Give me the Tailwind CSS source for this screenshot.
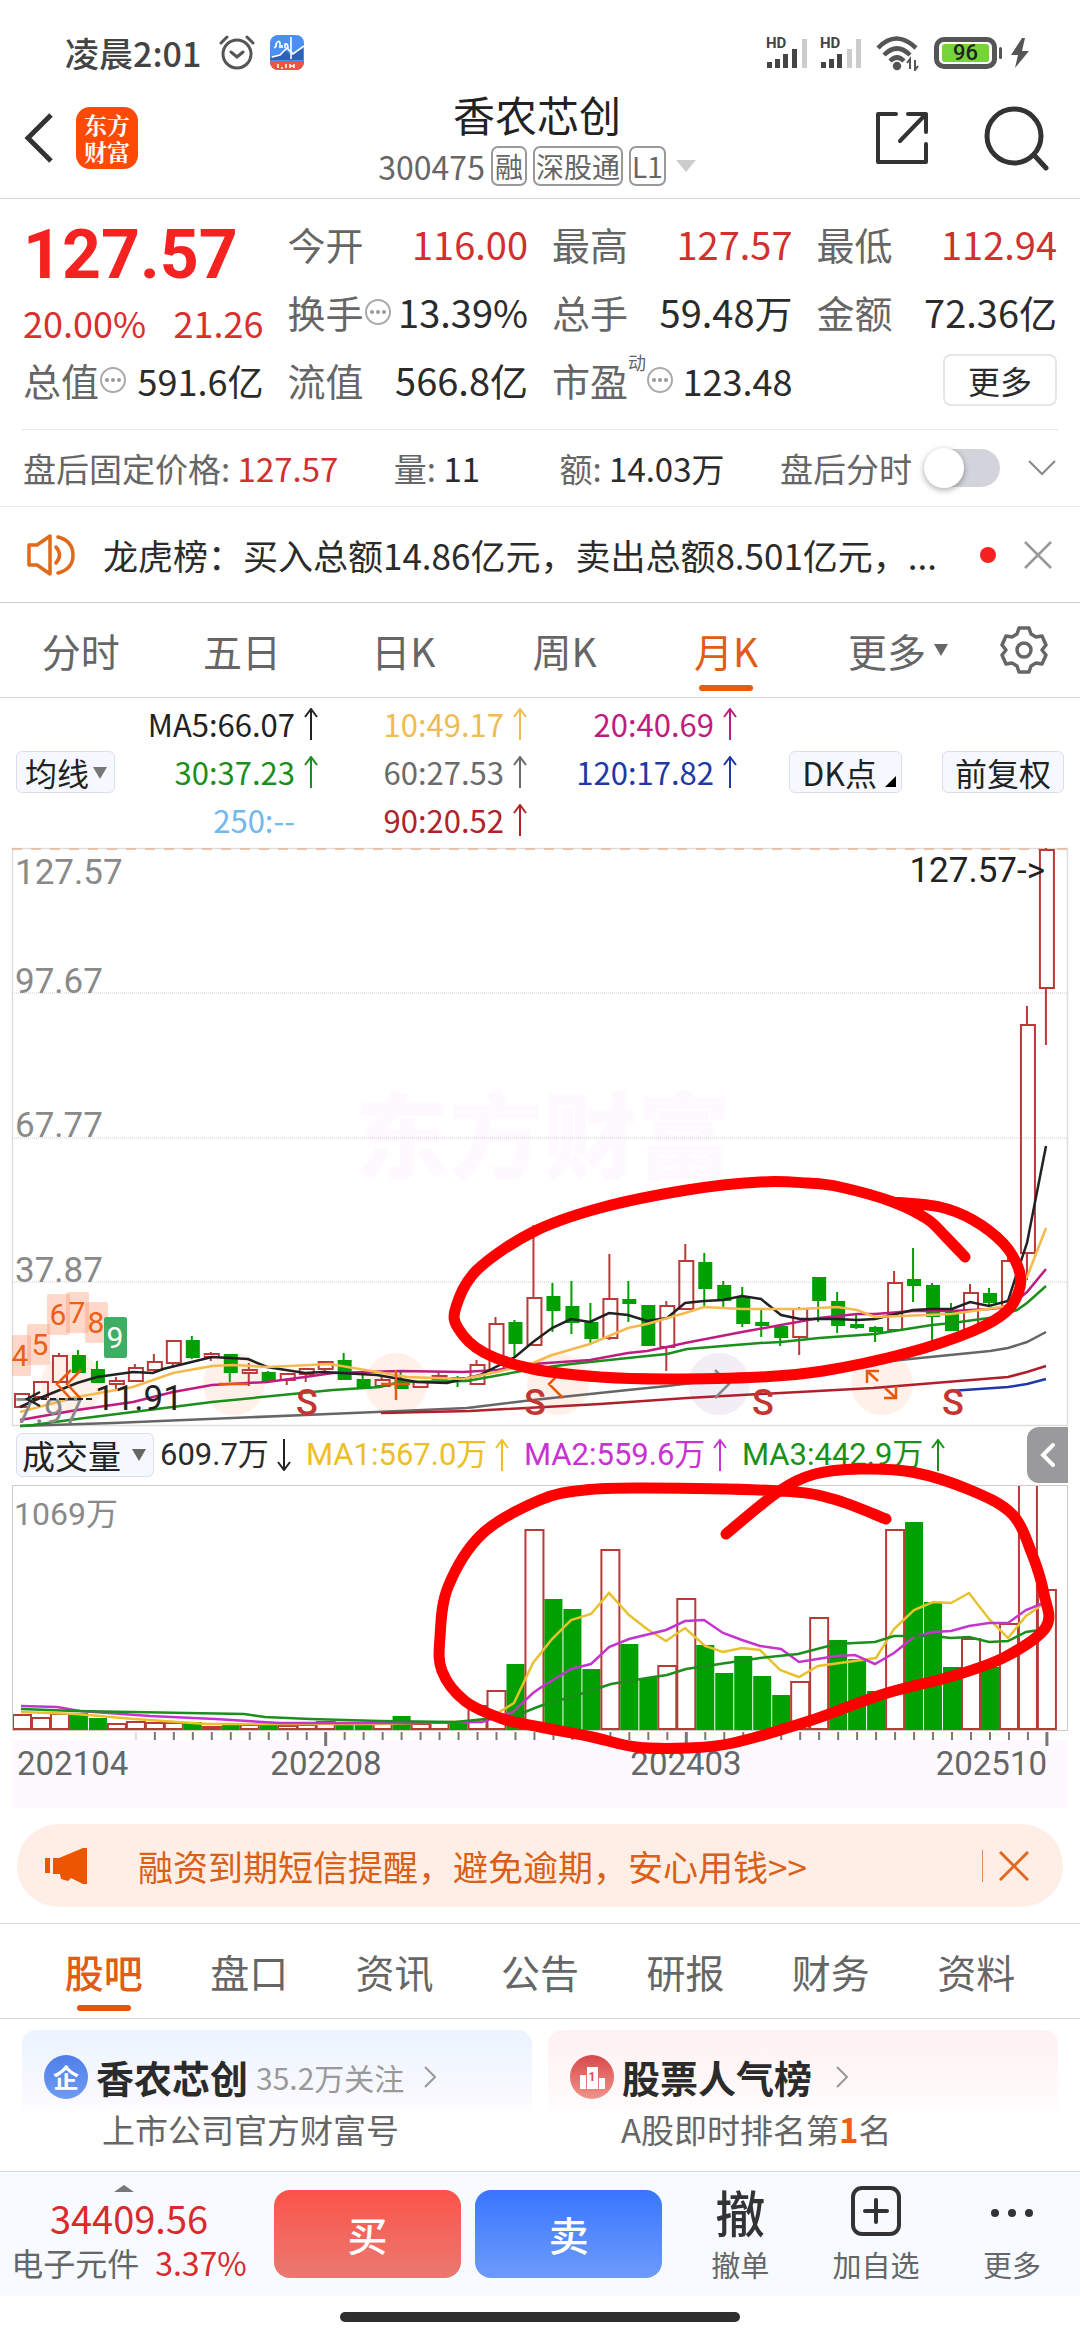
<!DOCTYPE html>
<html lang="zh-CN">
<head>
<meta charset="utf-8">
<meta name="viewport" content="width=device-width, initial-scale=1">
<title>香农芯创 300475</title>
<script src="https://cdn.jsdelivr.net/npm/@tailwindcss/browser@4"></script>
</head>
<body class="bg-white text-[#2b2b2b] font-['Noto_Sans_CJK_SC',sans-serif]">

<!-- status bar -->
<div class="flex items-center justify-between pt-[31px] pb-[3px] pl-[65px] pr-[50px] leading-[44px] text-[#444]">
  <div class="flex items-center">
    <span class="text-[34px] font-medium">凌晨2:01</span>
    <svg class="ml-[18px] size-9" viewBox="0 0 36 36" fill="none" stroke="#555" stroke-width="3" stroke-linecap="round"><circle cx="18" cy="19" r="14"/><path d="M12 17l6 5 6-5M2 8l6-6M34 8l-6-6"/></svg>
    <svg class="ml-[14px] size-9" viewBox="0 0 36 36"><defs><clipPath id="app"><rect width="34" height="35" x="1" rx="8"/></clipPath></defs><g clip-path="url(#app)"><path fill="#4b8ff0" d="M0 0h36v36H0z"/><path fill="#2e62b8" d="M0 24l8-3 8-6 6 5 12-7v12H0z"/><path d="M3 22l8-2 7-7 6 6 11-8M22 2v22" stroke="#fff" stroke-width="1.600" fill="none"/><path d="M5 13q3-1 2-4 3-5 4-1v5m2-3v3m3 0V9q3-1 3 4" stroke="#fff" stroke-width="1.600" fill="none"/><path fill="#e9573f" d="M0 26h36v10H0z"/><path d="M9 29v4m3 0h2m3-4v4m4-4v4m0-2h4m0-2v4" stroke="#fff" stroke-width="1.500"/></g></svg>
  </div>
  <div class="flex items-center">
    <svg class="h-9 w-[96px]" viewBox="0 0 96 36"><g fill="#444"><text x="0" y="13" font-size="15" font-weight="700" font-family="Roboto">HD</text><path d="M1 27h5v6H1zM9 24h5v9H9zM17 19h5v14h-5zM26 14h5v19h-5z"/><text x="54" y="13" font-size="15" font-weight="700" font-family="Roboto">HD</text><path d="M55 27h5v6h-5zM63 24h5v9h-5zM71 19h5v14h-5z"/></g><path fill="#ccc" d="M36 4h5v29h-5zM81 14h5v19h-5zM90 4h5v29h-5z"/></svg>
    <svg class="ml-[14px] h-9 w-[44px]" viewBox="0 0 44 36" fill="none" stroke="#555" stroke-width="4.500"><path d="M2 13q18-19 38 0M8 20q13-13 26 0M14 26q7-7 14 0"/><circle cx="21" cy="31" r="2" fill="#555"/><path d="M34 34V24l-3 4M39 25v10l3-4" stroke-width="2"/></svg>
    <span class="ml-[14px] flex h-8 w-[63px] items-center justify-center rounded-[10px] border-[5px] border-[#555]"><span class="flex h-[18px] w-[47px] items-center justify-center rounded-[3px] bg-[#76d33c] font-['Roboto',sans-serif] text-[22px] font-medium leading-[18px] text-[#222]">96</span></span>
    <span class="ml-[2px] h-3 w-[3px] rounded bg-[#555]"></span>
    <svg class="ml-[8px] h-8 w-5" viewBox="0 0 20 32" fill="#555"><path d="M12 1L1 18h7L5 31l14-17h-7l3-13z"/></svg>
  </div>
</div>

<!-- title bar -->
<header class="relative flex items-center justify-between border-b border-[#d9d9d9] pl-[24px] pr-[30px] pt-[12px] pb-[12px]">
  <div class="flex flex-1 items-center gap-[22px]">
    <button aria-label="返回"><svg class="h-[50px] w-[30px]" viewBox="0 0 30 50" fill="none" stroke="#333" stroke-width="5"><path d="M27 2L4 25l23 23"/></svg></button>
    <a href="#home" class="size-[62px] rounded-[14px] bg-[#ff4a05] pt-1 text-center font-['Noto_Serif_CJK_SC','Noto_Sans_CJK_SC',serif] text-[23px] font-bold leading-[27px] text-white">东方<br>财富</a>
  </div>
  <div class="flex flex-col items-center">
    <h1 class="text-[42px] leading-[48px] text-[#222]">香农芯创</h1>
    <div class="mt-2 flex items-center gap-[6px] text-[28px] leading-[36px] text-[#666]">
      <span class="text-[32px]">300475</span>
      <span class="rounded-[7px] border-2 border-[#999] px-[2px]">融</span>
      <span class="rounded-[7px] border-2 border-[#999] px-[1px]">深股通</span>
      <span class="rounded-[7px] border-2 border-[#999] px-[1px]">L1</span>
      <svg class="ml-1 h-3 w-5" viewBox="0 0 20 12" fill="#ccc"><path d="M0 0h20L10 12z"/></svg>
    </div>
  </div>
  <div class="flex flex-1 items-center justify-end gap-[54px]">
    <button aria-label="分享"><svg class="size-[56px]" viewBox="0 0 56 56" fill="none" stroke="#333" stroke-width="4" stroke-linecap="round" stroke-linejoin="round"><path d="M22 4H4v48h48V34M34 4h18v18M51 5L26 31"/></svg></button>
    <button aria-label="搜索"><svg class="size-[66px]" viewBox="0 0 66 66" fill="none" stroke="#333" stroke-width="5" stroke-linecap="round"><circle cx="30" cy="31" r="27"/><path d="M50 50l12 13"/></svg></button>
  </div>
</header>

<!-- quote -->
<section>
  <div class="grid grid-cols-4 gap-x-6 px-[23px] pt-[11px] pb-[15px] text-[38px] leading-[68px]">
    <div class="row-span-2 pt-[13px]">
      <div class="font-['Roboto',sans-serif] text-[68px] font-bold leading-[64px] text-[#f52222]">127.57</div>
      <div class="mt-[11px] flex justify-between text-[36px] leading-[48px] text-[#d9302e]"><span>20.00%</span><span>21.26</span></div>
    </div>
    <div class="flex justify-between"><span class="text-[#666]">今开</span><span class="text-[#d0312f]">116.00</span></div>
    <div class="flex justify-between"><span class="text-[#666]">最高</span><span class="text-[#d0312f]">127.57</span></div>
    <div class="flex justify-between"><span class="text-[#666]">最低</span><span class="text-[#d0312f]">112.94</span></div>
    <div class="flex justify-between whitespace-nowrap"><span class="flex items-center text-[#666]">换手<svg class="size-7" viewBox="0 0 28 28"><circle cx="14" cy="14" r="12" fill="none" stroke="#aaa" stroke-width="2"/><g fill="#999"><circle cx="8" cy="14" r="2"/><circle cx="14" cy="14" r="2"/><circle cx="20" cy="14" r="2"/></g></svg></span><span>13.39%</span></div>
    <div class="flex justify-between"><span class="text-[#666]">总手</span><span>59.48万</span></div>
    <div class="flex justify-between"><span class="text-[#666]">金额</span><span>72.36亿</span></div>
    <div class="flex justify-between whitespace-nowrap"><span class="flex items-center text-[#666]">总值<svg class="size-7" viewBox="0 0 28 28"><circle cx="14" cy="14" r="12" fill="none" stroke="#aaa" stroke-width="2"/><g fill="#999"><circle cx="8" cy="14" r="2"/><circle cx="14" cy="14" r="2"/><circle cx="20" cy="14" r="2"/></g></svg></span><span class="text-[36px]">591.6亿</span></div>
    <div class="flex justify-between"><span class="text-[#666]">流值</span><span>566.8亿</span></div>
    <div class="flex justify-between whitespace-nowrap"><span class="flex items-center text-[#666]">市盈<sup class="self-start text-[18px] leading-[32px] top-0">动</sup><svg class="size-7" viewBox="0 0 28 28"><circle cx="14" cy="14" r="12" fill="none" stroke="#aaa" stroke-width="2"/><g fill="#999"><circle cx="8" cy="14" r="2"/><circle cx="14" cy="14" r="2"/><circle cx="20" cy="14" r="2"/></g></svg></span><span class="text-[36px]">123.48</span></div>
    <div class="flex items-center justify-end"><button class="rounded-lg border-2 border-[#e8e5ea] px-[23px] text-[32px] leading-[48px]">更多</button></div>
  </div>
  <div class="mx-[22px] border-t border-[#e6e6e6]"></div>
  <div class="flex items-center justify-between border-b border-[#e6e6e6] pl-[23px] pr-[24px] text-[33px] leading-[76px]">
    <span><span class="text-[#666]">盘后固定价格: </span><span class="text-[#d0312f]">127.57</span></span>
    <span><span class="text-[#666]">量: </span>11</span>
    <span class="ml-6"><span class="text-[#666]">额: </span>14.03万</span>
    <span class="flex items-center gap-3">
      <label for="after" class="text-[#666]">盘后分时</label>
      <input id="after" type="checkbox" role="switch" class="relative h-[38px] w-[76px] appearance-none rounded-full bg-[#d3d3dc] before:absolute before:left-0 before:-top-px before:size-10 before:rounded-full before:bg-white before:shadow-[0_2px_6px_#0005] before:content-['']">
      <button aria-label="展开" class="ml-4"><svg class="h-4 w-7" viewBox="0 0 28 16" fill="none" stroke="#888" stroke-width="2"><path d="M1 1l13 13L27 1"/></svg></button>
    </span>
  </div>
</section>

<!-- notice -->
<div class="flex items-center border-b border-[#d0d0d0] pl-[26px] pr-[28px] leading-[95px]">
  <svg class="h-[42px] w-[50px]" viewBox="0 0 50 42" fill="none" stroke="#e06a1c" stroke-width="3.500" stroke-linejoin="round" stroke-linecap="round"><path d="M3 11h8L24 2v38L11 31H3zM30 13q7 8 0 16M32 3q15 4 15 18T32 39"/></svg>
  <a href="#news" class="ml-[27px] flex-1 truncate text-[35px]">龙虎榜：买入总额14.86亿元，卖出总额8.501亿元，...</a>
  <span class="size-4 rounded-full bg-[#f52222]"></span>
  <button aria-label="关闭" class="ml-7"><svg class="size-7" viewBox="0 0 28 28" stroke="#999" stroke-width="2.500"><path d="M1 1l26 26M27 1L1 27"/></svg></button>
</div>

<!-- period tabs -->
<nav class="flex items-center border-b border-[#d9d9d9] text-[39px] leading-[94px] text-[#666]">
  <div class="grid flex-1 grid-cols-6 text-center">
    <a href="#t">分时</a>
    <a href="#5d">五日</a>
    <a href="#d">日K</a>
    <a href="#w">周K</a>
    <a href="#m" class="relative text-[#df5d14]">月K<span class="absolute inset-x-0 bottom-[6px] mx-auto h-[6px] w-[54px] rounded bg-[#e85a0c]"></span></a>
    <button class="flex items-center justify-end gap-2 pr-5">更多<svg class="h-3 w-[14px]" viewBox="0 0 14 12" fill="#666"><path d="M0 0h14L7 12z"/></svg></button>
  </div>
  <button aria-label="设置" class="ml-8 mr-8"><svg class="size-[48px]" viewBox="0 0 48 48" fill="none" stroke="#666" stroke-width="3.500" stroke-linejoin="round"><path d="M19 2h10l2 6 5 3 6-1 4 9-4 5 4 5-4 9-6-1-5 3-2 6H19l-2-6-5-3-6 1-4-9 4-5-4-5 4-9 6 1 5-3z"/><circle cx="24" cy="24" r="7"/></svg></button>
</nav>

<!-- moving averages -->
<section class="flex items-center pl-4 pr-4 pt-[2px] pb-1">
  <div class="relative">
    <select aria-label="主图指标" class="w-[99px] appearance-none rounded-[6px] border border-[#dcdfe8] bg-[#f5f9ff] pl-[8px] text-[32px] leading-[40px] text-[#222]"><option>均线</option></select>
    <svg class="pointer-events-none absolute right-[8px] top-4 h-3 w-[14px]" viewBox="0 0 14 12" fill="#777"><path d="M0 0h14L7 12z"/></svg>
  </div>
  <div id="ma" class="grid grid-cols-[204px_209px_210px] text-[31px] leading-[48px]"></div>
  <div class="ml-auto flex gap-10 text-[32px] leading-[40px] text-[#222]">
    <button class="flex items-end gap-2 rounded-[6px] border border-[#dcdfe8] bg-[#f5f9ff] pl-[12px] pr-[5px]">DK点<svg class="mb-[5px] size-[11px]" viewBox="0 0 11 11"><path d="M11 0v11H0z"/></svg></button>
    <button class="rounded-[6px] border border-[#dcdfe8] bg-[#f5f9ff] px-[12px]">前复权</button>
  </div>
</section>

<!-- charts -->
<section class="relative">
  <svg id="price" class="block w-full overflow-visible font-['Roboto',sans-serif]" viewBox="0 848 1080 578"></svg>
  <div class="flex items-center pl-4 pr-3 font-['Roboto','Noto_Sans_CJK_SC',sans-serif] text-[31px] leading-[58px]">
    <div class="relative flex">
      <select aria-label="副图指标" class="w-[138px] appearance-none rounded-[6px] border border-[#dcdfe8] bg-[#f5f9ff] pl-[5px] font-['Noto_Sans_CJK_SC',sans-serif] text-[33px] leading-[42px] text-[#222]"><option>成交量</option></select>
      <svg class="pointer-events-none absolute right-[8px] top-4 h-3 w-[14px]" viewBox="0 0 14 12" fill="#666"><path d="M0 0h14L7 12z"/></svg>
    </div>
    <div id="vma" class="flex flex-1"></div>
    <button aria-label="收起" class="flex h-[56px] w-[41px] items-center justify-center rounded-l-[12px] bg-[#9a9a9c]"><svg class="h-[26px] w-4" viewBox="0 0 16 26" fill="none" stroke="#fff" stroke-width="4" stroke-linecap="round"><path d="M13 3L3 13l10 10"/></svg></button>
  </div>
  <svg id="volume" class="block w-full font-['Roboto','Noto_Sans_CJK_SC',sans-serif]" viewBox="0 1484 1080 324"></svg>
  <svg id="ink" class="pointer-events-none absolute inset-0 w-full" viewBox="0 848 1080 960" fill="none" stroke="#f00" stroke-width="11" stroke-linecap="round" stroke-linejoin="round"></svg>
</section>

<!-- promo -->
<div class="border-b border-[#d6d6d6] px-[17px] py-4">
  <div class="flex items-center rounded-full bg-[#ffeee6] pl-[28px] pr-[34px] leading-[83px] text-[#da5f17]">
    <svg class="h-[38px] w-[44px]" viewBox="0 0 44 38" fill="#ee5500"><path d="M0 11h5v15H0zM8 11h6L38 1h4v36h-4l-12-6-3 3-7-2-1-5H8z"/></svg>
    <a href="#promo" class="ml-[49px] flex-1 text-[35px]">融资到期短信提醒，避免逾期，安心用钱&gt;&gt;</a>
    <span class="h-8 w-px bg-[#d98a5c]"></span>
    <button aria-label="关闭提醒" class="ml-4"><svg class="size-[30px]" viewBox="0 0 30 30" stroke="#e0681f" stroke-width="3"><path d="M1 1l28 28M29 1L1 29"/></svg></button>
  </div>
</div>

<!-- content tabs -->
<nav class="grid grid-cols-7 border-b border-[#d6d6d6] px-[31px] text-center text-[39px] leading-[94px] text-[#666]">
  <a href="#bar" class="relative font-medium text-[#df5d14]">股吧<span class="absolute inset-x-0 bottom-[7px] mx-auto h-[6px] w-[54px] rounded bg-[#e2560d]"></span></a>
  <a href="#pk">盘口</a><a href="#zx">资讯</a><a href="#gg">公告</a><a href="#yb">研报</a><a href="#cw">财务</a><a href="#zl">资料</a>
</nav>

<div class="grid grid-cols-2 gap-4 px-[22px] pt-[11px]">
  <a href="#official" class="block rounded-t-[14px] bg-linear-to-b from-[#eaf4ff] via-[#fbf9ff] via-50% to-white to-60% pl-[22px] pt-[23px] pb-[18px]">
    <div class="flex items-center leading-[48px]">
      <span class="flex size-11 items-center justify-center rounded-full bg-linear-to-b from-[#4f7ee8] to-[#6f9bf3] text-[26px] font-bold text-white">企</span>
      <span class="ml-2 text-[38px] font-bold">香农芯创</span>
      <span class="ml-2 text-[30px] text-[#999]">35.2万关注</span>
      <svg class="ml-5 h-[22px] w-3" viewBox="0 0 12 22" fill="none" stroke="#999" stroke-width="2"><path d="M1 1l10 10L1 21"/></svg>
    </div>
    <p class="mt-1 pl-[58px] text-[33px] leading-[48px] text-[#666]">上市公司官方财富号</p>
  </a>
  <a href="#rank" class="block rounded-t-[14px] bg-linear-to-b from-[#fff1f1] via-[#fffafb] via-50% to-white to-60% pl-[22px] pt-[23px] pb-[18px]">
    <div class="flex items-center leading-[48px]">
      <svg class="size-11" viewBox="0 0 44 44"><defs><linearGradient id="rg" x2="0" y2="1"><stop stop-color="#d9494a"/><stop offset="1" stop-color="#f0938c"/></linearGradient></defs><circle cx="22" cy="22" r="22" fill="url(#rg)"/><path fill="#fff" d="M10 20h6v14h-6zM17 12h11v22H17zM29 23h6v11h-6z"/><text x="22" y="26" text-anchor="middle" font-size="12" font-weight="700" font-family="Roboto" fill="#d9494a">1</text></svg>
      <span class="ml-2 text-[38px] font-bold">股票人气榜</span>
      <svg class="ml-6 h-[22px] w-3" viewBox="0 0 12 22" fill="none" stroke="#999" stroke-width="2"><path d="M1 1l10 10L1 21"/></svg>
    </div>
    <p class="mt-1 pl-[51px] text-[33px] leading-[48px] text-[#666]">A股即时排名第<b class="text-[#f06010]">1</b>名</p>
  </a>
</div>

<!-- trade bar -->
<footer>
  <div class="grid grid-cols-[258px_389fr_402fr] items-center border-t border-[#d3d6dc] bg-[#f7faff] py-[11px]">
    <a href="#index" class="flex flex-col items-center">
      <svg class="mr-[10px] h-[7px] w-5" viewBox="0 0 20 7" fill="#777"><path d="M0 7L10 0l10 7z"/></svg>
      <span class="mt-1 text-[38px] leading-[44px] text-[#d92b2b]">34409.56</span>
      <span class="flex gap-4 text-[32px] leading-[44px] text-[#666]">电子元件<span class="text-[#d92b2b]">3.37%</span></span>
    </a>
    <div class="ml-4 mr-0 grid grid-cols-2 gap-[14px] text-[40px] font-medium leading-[88px] text-white">
      <button class="rounded-[16px] bg-linear-to-b from-[#fb5248] to-[#ea7870]">买</button>
      <button class="rounded-[16px] bg-linear-to-b from-[#3875ff] to-[#6e9bfb]">卖</button>
    </div>
    <div class="ml-[10px] grid grid-cols-3 items-end text-[29px] leading-[42px] text-[#666]">
      <button class="flex flex-col items-center"><span class="text-[50px] font-medium leading-[56px] text-[#333]">撤</span><span class="mt-1">撤单</span></button>
      <button class="flex flex-col items-center"><svg class="mb-[7px] size-[50px]" viewBox="0 0 50 50" fill="none" stroke="#333" stroke-width="4" stroke-linecap="round"><rect x="2" y="2" width="46" height="46" rx="9"/><path d="M25 14v22M14 25h22"/></svg>加自选</button>
      <button class="flex flex-col items-center"><svg class="mb-[26px] h-2 w-[44px]" viewBox="0 0 44 8" fill="#333"><circle cx="5" cy="4" r="4"/><circle cx="22" cy="4" r="4"/><circle cx="39" cy="4" r="4"/></svg>更多</button>
    </div>
  </div>
  <div class="flex justify-center pt-4 pb-[16px]"><span class="h-[10px] w-[37%] rounded-full bg-[#2e2e2e]"></span></div>
</footer>

<script>
const $ = id => document.getElementById(id);
const RED = '#b93a38', GREEN = '#00a000';
const up = (c, w = 1) => `<svg class="inline-block h-[32px] w-[15px] shrink-0" viewBox="0 0 15 32" fill="none" stroke="${c}" stroke-width="${w}"><path d="M7 32V1M1 9l6-8 6 8"/></svg>`;

// legends
$('ma').innerHTML = [
  ['MA5:66.07', '#222'], ['10:49.17', '#f0bb52'], ['20:40.69', '#c01c80'],
  ['30:37.23', '#1b8f1b'], ['60:27.53', '#6b6b6b'], ['120:17.82', '#2038a8'],
  ['250:--', '#72b8ea'], ['90:20.52', '#b0232c']
].map(([t, c]) => `<div class="flex items-center justify-end gap-[9px]" style="color:${c}">${t}${t.includes('--') ? '<i class="w-[15px]"></i>' : up(c, 2)}</div>`).join('');
$('vma').innerHTML = `<span class="ml-[6px] flex w-[146px] items-center gap-2">609.7万<svg class="h-[32px] w-[15px]" viewBox="0 0 15 32" fill="none" stroke="#222" stroke-width="2"><path d="M7 0v31M1 23l6 8 6-8"/></svg></span>` +
  [['MA1:567.0万', '#ecbf28'], ['MA2:559.6万', '#c932d3'], ['MA3:442.9万', '#189118']]
  .map(([t, c]) => `<span class="flex w-[218px] items-center gap-2" style="color:${c}">${t}${up(c, 2)}</span>`).join('');

const X = i => 21 + 18.98 * i;
const line = (p, c) => `<polyline points="${p}" fill="none" stroke="${c}" stroke-width="2.500"/>`;
const text = (x, y, t, c, s = 36, extra = '') => `<text x="${x}" y="${y}" font-size="${s}" fill="${c}" ${extra}>${t}</text>`;

// up/down flag, high, body top, body bottom, low
const candles = [
[1,1393,1394,1407,1407],[1,1382,1382,1397,1397],[1,1353,1356,1382,1382],[0,1350,1356,1372,1372],[0,1361,1370,1382,1382],[1,1377,1381,1384,1391],
[1,1364,1368,1381,1381],[1,1354,1362,1370,1370],[1,1341,1341,1363,1366],[0,1336,1341,1357,1359],[1,1352,1354,1357,1361],[0,1354,1355,1372,1382],
[1,1363,1370,1373,1386],[0,1371,1373,1380,1380],[1,1374,1374,1380,1385],[1,1369,1369,1374,1382],[1,1362,1362,1369,1373],[0,1353,1361,1379,1379],
[0,1375,1380,1388,1388],[1,1377,1380,1386,1386],[0,1370,1380,1388,1388],[1,1382,1382,1387,1387],[1,1372,1376,1379,1379],[0,1376,1378,1380,1387],
[1,1360,1365,1384,1384],[1,1317,1324,1370,1373],[0,1320,1323,1343,1357],[1,1225,1298,1345,1345],[0,1283,1297,1310,1332],[0,1281,1307,1322,1334],
[0,1303,1323,1338,1343],[1,1254,1299,1338,1340],[0,1281,1300,1303,1322],[0,1305,1306,1345,1345],[1,1301,1306,1347,1371],[1,1244,1261,1309,1309],
[0,1253,1263,1288,1307],[0,1281,1286,1300,1308],[0,1287,1297,1323,1327],[0,1309,1323,1325,1337],[0,1325,1327,1337,1346],[1,1307,1309,1337,1355],
[0,1278,1278,1300,1322],[0,1292,1302,1325,1333],[0,1315,1325,1327,1329],[0,1326,1328,1331,1342],[1,1271,1283,1330,1330],[0,1248,1280,1285,1302],
[0,1283,1286,1316,1342],[0,1303,1313,1330,1330],[1,1284,1293,1331,1331],[0,1288,1294,1302,1305],[1,1256,1261,1306,1306],[1,1006,1025,1253,1280],[1,848,850,988,1045]];
const candle = ([u, h, t, b, l], i) => {
  const x = X(i), c = u ? RED : GREEN;
  return `<path d="M${x} ${h}V${t}M${x} ${b}V${l}" stroke="${c}" stroke-width="2"/>` +
    (u ? `<rect x="${x - 6}" y="${t}" width="14" height="${b - t}" fill="none" stroke="${c}" stroke-width="2"/>`
       : `<rect x="${x - 6}" y="${t - 1}" width="14" height="${b - t + 2}" fill="${c}"/>`);
};
let s = text(355, 1172, '东方财富', '#fdf9fe', 94, 'font-weight="900" font-family="Noto Sans CJK SC"');
s += [993, 1138, 1282].map(y => `<path d="M12 ${y}H1067" stroke="#ccc" stroke-dasharray="1 1"/>`).join('');
s += `<rect x="12.500" y="848.500" width="1055" height="577" fill="none" stroke="#ddd" stroke-width="1.500"/><path d="M12 849H1067" stroke="#e8b797" stroke-width="1.500" stroke-dasharray="10 9"/>`;
s += [[72,'#fff0ea'],[234,'#fff0ea'],[396,'#fff0ea'],[558,'#fff0ea'],[719,'#f2eef6'],[882,'#fff0ea']].map(([x, c]) => `<circle cx="${x}" cy="1384" r="31" fill="${c}"/>`).join('');
s += candles.map(candle).join('');
s += line('20,1426 113,1423 305,1415 400,1411 467,1408 533,1400 590,1394 628,1390 667,1386 700,1382 790,1372 910,1359 990,1351 1008,1348 1027,1342 1046,1332', '#666');
s += line('381,1413 470,1411 600,1404 687,1398 760,1394 873,1388 1008,1377 1027,1372 1046,1366', '#b0202c');
s += line('950,1391 1008,1387 1027,1384 1046,1379', '#2038a8');
s += line('20,1426 33,1425 77,1419 133,1412 212,1402 333,1390 380,1387 400,1382 467,1381 533,1369 571,1364 628,1358 647,1356 667,1354 687,1349 723,1346 760,1343 781,1342 819,1338 875,1334 932,1325 952,1323 989,1318 1017,1310 1027,1303 1046,1286', '#1b8f1b');
s += line('20,1420 77,1410 133,1402 173,1392 212,1385 267,1382 305,1377 333,1373 400,1371 463,1372 497,1370 533,1364 590,1360 628,1353 647,1351 667,1347 685,1343 742,1332 781,1325 819,1318 857,1314 875,1314 913,1311 952,1311 989,1309 1008,1307 1027,1292 1046,1269', '#c01c80');
s += line('20,1407 40,1398 77,1383 97,1377 133,1372 153,1373 163,1369 212,1357 248,1359 267,1367 305,1373 323,1372 377,1375 400,1379 417,1382 447,1383 480,1375 515,1357 533,1342 552,1328 571,1319 590,1322 609,1313 628,1315 647,1321 667,1318 685,1303 704,1301 723,1300 742,1296 761,1299 781,1315 800,1319 837,1319 857,1320 875,1319 913,1310 932,1309 952,1309 970,1302 989,1306 1008,1301 1017,1273 1027,1243 1046,1146', '#222');
s += line('20,1412 77,1397 133,1387 173,1373 212,1366 233,1365 267,1367 330,1364 377,1372 407,1377 463,1379 497,1372 533,1363 552,1355 590,1344 628,1328 647,1324 685,1313 704,1307 742,1309 800,1309 837,1307 857,1310 875,1317 952,1314 1008,1306 1027,1277 1046,1228', '#f5b94d');
s += `<g fill="none" stroke="#e8590c" stroke-width="2.500"><path d="M71 1370L57 1384l14 15M81 1370l-14 14 14 15M219 1384h29M381 1384h29M396 1370v30M563 1370l-14 14 14 14M867 1383v-12h12M867 1371l11 10M896 1386v12h-12M896 1398l-11-10"/><path stroke="#888" d="M715 1370l14 14-14 14"/></g>`;
s += [[12,1335,20,'4',19],[27,1324,40,'5',23],[47,1294,58,'6',23],[66,1292,77,'7',23],[85,1302,96,'8',23],[104,1317,115,'9',23]].map(([x, y, cx, t, w]) =>
  `<rect x="${x}" y="${y}" width="${w}" height="41" rx="2" fill="${t === '9' ? '#3fae63' : '#ff8a5c55'}"/>` + text(cx, y + 31, t, t === '9' ? '#fff' : '#ee5f14', 30, 'text-anchor="middle"')).join('');
s += [[884,'127.57'],[993,'97.67'],[1137,'67.77'],[1282,'37.87'],[1423,'7.97']].map(([y, t]) => text(15, y, t, '#8a8a8a', 35)).join('');
s += text(95, 1410, '11.91', '#222', 35) + `<path d="M32 1399h62" stroke="#222" stroke-width="2" stroke-dasharray="6 3"/><path d="M40 1392l-13 7 13 7" fill="none" stroke="#222" stroke-width="2.500"/>`;
s += text(1045, 882, '127.57-&gt;', '#222', 35, 'text-anchor="end"');
s += [307, 535, 763, 953].map(x => text(x, 1415, 'S', '#c43531', 36, 'text-anchor="middle" font-weight="500"')).join('');
$('price').innerHTML = s;

// volume bars: [rise, top]
const vols = [[1,1715],[1,1718],[1,1714],[0,1714],[0,1719],[1,1724],[1,1722],[1,1723],[1,1723],[0,1723],[1,1727],[0,1724],[1,1725],[0,1726],[1,1726],[1,1725],[1,1722],[0,1724],[0,1724],[1,1724],[0,1717],[1,1724],[1,1723],[0,1723],[1,1706],[1,1691],[0,1665],[1,1530],[0,1600],[0,1610],[0,1670],[1,1550],[0,1645],[0,1679],[1,1666],[1,1599],[0,1646],[0,1674],[0,1657],[0,1677],[0,1696],[1,1682],[1,1618],[0,1641],[0,1660],[0,1692],[1,1530],[0,1523],[0,1603],[0,1668],[1,1639],[0,1668],[1,1624],[1,1478],[1,1590]];
let v = '<rect x="12" y="1740" width="1056" height="68" fill="#fdf9fe"/><g clip-path="url(#vc)"><clipPath id="vc"><rect x="12" y="1485" width="1056" height="246"/></clipPath>';
v += vols.map(([u, t], i) => u ? `<rect x="${X(i) - 8}" y="${t}" width="18" height="${1729 - t}" fill="none" stroke="${RED}" stroke-width="2"/>` : `<rect x="${X(i) - 8}" y="${t - 1}" width="18" height="${1731 - t}" fill="${GREEN}"/>`).join('') + '</g>';
v += '<path d="M12.500 1730V1485.500H1067.500V1730.500H12" fill="none" stroke="#ccc"/>';
v += line('21,1712 76,1714 134,1719 207,1724 379,1724 482,1721 496,1714 514,1703 533,1663 552,1639 571,1620 591,1614 609,1593 629,1615 647,1629 666,1641 685,1628 705,1646 723,1652 742,1648 760,1650 780,1670 799,1677 818,1666 876,1658 894,1629 914,1610 933,1602 951,1603 969,1593 989,1619 1008,1638 1026,1616 1046,1602', '#e8c22e');
v += line('21,1706 57,1707 80,1711 150,1716 215,1719 280,1723 400,1723 482,1722 513,1712 533,1693 540,1688 571,1669 591,1664 609,1647 629,1639 666,1630 685,1621 704,1620 723,1633 742,1640 760,1646 781,1649 799,1662 836,1656 855,1655 875,1664 894,1653 914,1637 933,1632 951,1631 969,1626 989,1623 1008,1623 1026,1610 1046,1602', '#c435cf');
v += line('21,1709 76,1711 244,1714 265,1717 310,1719 380,1721 455,1722 515,1716 540,1706 581,1694 602,1687 611,1684 647,1678 667,1675 686,1669 760,1658 798,1654 836,1644 855,1643 875,1642 894,1636 933,1636 951,1638 969,1637 989,1642 1008,1641 1026,1632 1046,1629', '#1b8f1b');
for (let i = 6; i < 55; i++) { const big = i % 19 === 16; v += `<path d="M${X(i) + 1} 1732v${big ? 14 : 8}" stroke="${i === 6 ? '#ddd' : '#777'}" stroke-width="${big ? 3 : 2}"/>`; }
v += text(14, 1525, '1069万', '#8a8a8a', 32);
v += text(17, 1775, '202104', '#666', 33) + text(326, 1775, '202208', '#666', 33, 'text-anchor="middle"') + text(686, 1775, '202403', '#666', 33, 'text-anchor="middle"') + text(1047, 1775, '202510', '#666', 33, 'text-anchor="end"');
$('volume').innerHTML = v;

// freehand strokes, smoothed through their points
const smooth = pts => pts.reduce((d, p, i) => {
  if (!i) return `M${p}`;
  const a = pts[i - 2] || pts[i - 1], b = pts[i - 1], n = pts[i + 1] || p;
  return d + `C${b[0] + (p[0] - a[0]) / 6} ${b[1] + (p[1] - a[1]) / 6} ${p[0] - (n[0] - b[0]) / 6} ${p[1] - (n[1] - b[1]) / 6} ${p}`;
}, '');
$('ink').innerHTML = [
  [[965,1257],[945,1236],[927,1219],[893,1202],[840,1187],[807,1183],[760,1182],[687,1190],[600,1208],[533,1232],[477,1270],[456,1307],[458,1328],[483,1352],[533,1369],[600,1377],[667,1379],[760,1377],[823,1371],[907,1353],[973,1331],[1007,1311],[1020,1287],[1018,1267],[1003,1243],[973,1220],[940,1207],[893,1202]],
  [[726,1534],[778,1492],[815,1474],[860,1469],[912,1472],[970,1490],[1012,1514],[1032,1554],[1044,1594],[1046,1627],[1005,1657],[953,1676],[884,1694],[809,1721],[733,1743],[688,1748],[636,1747],[592,1737],[540,1727],[503,1719],[465,1701],[442,1671],[440,1637],[448,1587],[482,1534],[540,1500],[585,1490],[643,1488],[781,1491],[833,1499],[886,1519]]
].map(p => `<path d="${smooth(p)}"/>`).join('');
</script>
</body>
</html>
